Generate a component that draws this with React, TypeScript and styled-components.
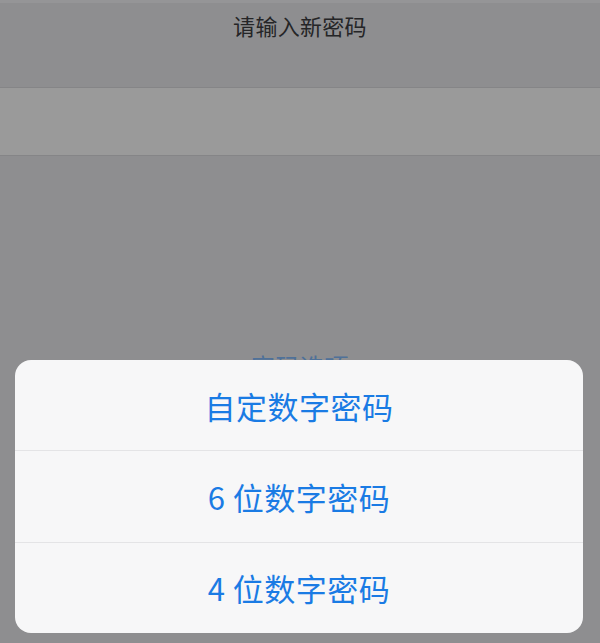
import React from 'react';
import styled, { createGlobalStyle } from 'styled-components';

const GlobalStyle = createGlobalStyle`
  html, body {
    margin: 0;
    padding: 0;
    background: #8e8e90;
  }
  body {
    font-family: "Noto Sans CJK SC", "Liberation Sans", sans-serif;
  }
`;

const Screen = styled.div`
  position: relative;
  width: 600px;
  height: 643px;
  overflow: hidden;
  background: #8e8e90;
  display: flex;
  flex-direction: column;
`;

const Header = styled.div`
  height: 87px;
  display: flex;
  justify-content: center;
  padding-top: 8px;
  box-sizing: border-box;
  border-top: 3px solid #959597;
`;

const Title = styled.div`
  font-size: 22px;
  line-height: 28px;
  color: #252527;
  letter-spacing: 0.3px;
`;

const InputBand = styled.div`
  height: 67px;
  background: #9a9a9a;
  border-top: 1px solid #858587;
  border-bottom: 1px solid #858587;
`;

const OptionsLink = styled.div`
  margin-top: 195px;
  text-align: center;
  font-size: 24px;
  line-height: 30px;
  color: #4f7199;
  letter-spacing: 0.5px;
`;

const Sheet = styled.div`
  position: absolute;
  left: 15px;
  right: 17px;
  top: 360px;
  height: 273px;
  background: #f7f7f8;
  border-radius: 16px;
  overflow: hidden;
  display: flex;
  flex-direction: column;
`;

const SheetRow = styled.button<{ $last?: boolean }>`
  flex: 1;
  border: none;
  background: transparent;
  border-bottom: ${(p) => (p.$last ? 'none' : '1px solid #e4e4e6')};
  font-family: "Noto Sans CJK SC", "Liberation Sans", sans-serif;
  font-size: 31px;
  color: #1a7be4;
  display: flex;
  align-items: center;
  justify-content: center;
  padding: 0;
  letter-spacing: 0.5px;
`;

const options = ['自定数字密码', '6 位数字密码', '4 位数字密码'];

export default function App() {
  return (
    <>
      <GlobalStyle />
      <Screen>
        <Header>
          <Title>请输入新密码</Title>
        </Header>
        <InputBand />
        <OptionsLink>密码选项</OptionsLink>
        <Sheet>
          {options.map((o, i) => (
            <SheetRow key={o} $last={i === options.length - 1}>
              {o}
            </SheetRow>
          ))}
        </Sheet>
      </Screen>
    </>
  );
}
